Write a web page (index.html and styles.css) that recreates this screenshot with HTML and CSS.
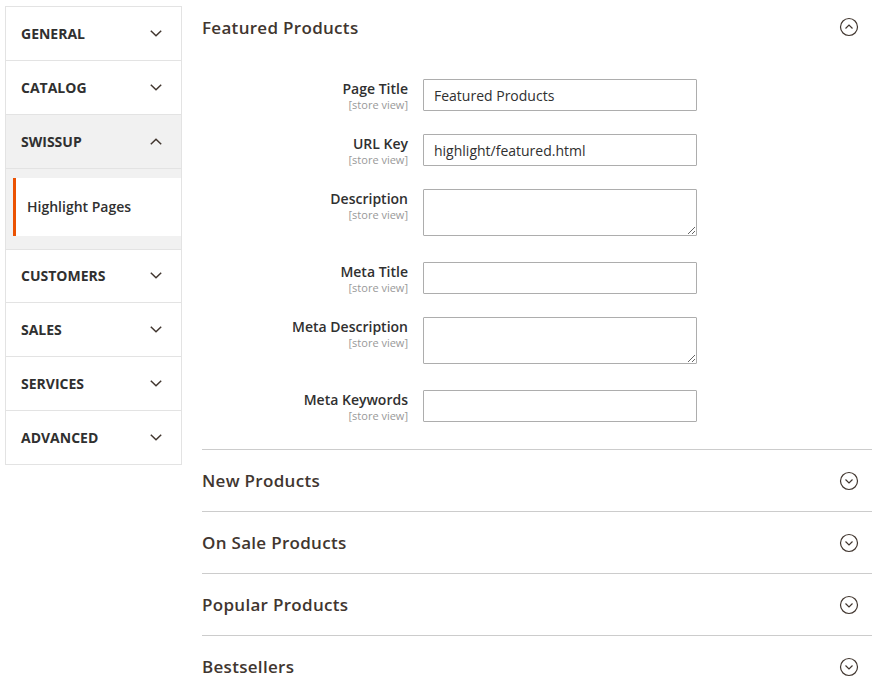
FILE: index.html
```html
<!DOCTYPE html>
<html>
<head>
<meta charset="utf-8">
<link rel="stylesheet" href="styles.css">
</head>
<body>
<div class="page">
  <nav class="sidebar">
    <div class="tab"><span>GENERAL</span><svg class="chev" width="12" height="7" viewBox="0 0 12 7"><polyline points="0.8,0.8 6,5.8 11.2,0.8"/></svg></div>
    <div class="tab"><span>CATALOG</span><svg class="chev" width="12" height="7" viewBox="0 0 12 7"><polyline points="0.8,0.8 6,5.8 11.2,0.8"/></svg></div>
    <div class="tab open"><span>SWISSUP</span><svg class="chev" width="12" height="7" viewBox="0 0 12 7"><polyline points="0.8,6.2 6,1.2 11.2,6.2"/></svg></div>
    <div class="submenu">
      <div class="subitem">Highlight Pages</div>
    </div>
    <div class="tab after-sub"><span>CUSTOMERS</span><svg class="chev" width="12" height="7" viewBox="0 0 12 7"><polyline points="0.8,0.8 6,5.8 11.2,0.8"/></svg></div>
    <div class="tab"><span>SALES</span><svg class="chev" width="12" height="7" viewBox="0 0 12 7"><polyline points="0.8,0.8 6,5.8 11.2,0.8"/></svg></div>
    <div class="tab"><span>SERVICES</span><svg class="chev" width="12" height="7" viewBox="0 0 12 7"><polyline points="0.8,0.8 6,5.8 11.2,0.8"/></svg></div>
    <div class="tab"><span>ADVANCED</span><svg class="chev" width="12" height="7" viewBox="0 0 12 7"><polyline points="0.8,0.8 6,5.8 11.2,0.8"/></svg></div>
  </nav>
  <main class="main">
    <section class="section first">
      <div class="head"><h2>Featured Products</h2><svg class="toggle" width="20" height="20" viewBox="0 0 20 20"><circle cx="10" cy="10" r="8.5"/><polyline points="6.5,11.5 10,8 13.5,11.5"/></svg></div>
      <div class="form">
        <div class="row">
          <div class="label"><div class="lt">Page Title</div><div class="scope">[store view]</div></div>
          <input class="field" type="text" value="Featured Products">
        </div>
        <div class="row">
          <div class="label"><div class="lt">URL Key</div><div class="scope">[store view]</div></div>
          <input class="field" type="text" value="highlight/featured.html">
        </div>
        <div class="row tall">
          <div class="label"><div class="lt">Description</div><div class="scope">[store view]</div></div>
          <textarea class="field area"></textarea>
        </div>
        <div class="row">
          <div class="label"><div class="lt">Meta Title</div><div class="scope">[store view]</div></div>
          <input class="field" type="text" value="">
        </div>
        <div class="row tall">
          <div class="label"><div class="lt">Meta Description</div><div class="scope">[store view]</div></div>
          <textarea class="field area"></textarea>
        </div>
        <div class="row lastrow">
          <div class="label"><div class="lt">Meta Keywords</div><div class="scope">[store view]</div></div>
          <input class="field" type="text" value="">
        </div>
      </div>
    </section>
    <section class="section">
      <div class="head"><h2>New Products</h2><svg class="toggle" width="20" height="20" viewBox="0 0 20 20"><circle cx="10" cy="10" r="8.5"/><polyline points="6.5,8.5 10,12 13.5,8.5"/></svg></div>
    </section>
    <section class="section">
      <div class="head"><h2>On Sale Products</h2><svg class="toggle" width="20" height="20" viewBox="0 0 20 20"><circle cx="10" cy="10" r="8.5"/><polyline points="6.5,8.5 10,12 13.5,8.5"/></svg></div>
    </section>
    <section class="section">
      <div class="head"><h2>Popular Products</h2><svg class="toggle" width="20" height="20" viewBox="0 0 20 20"><circle cx="10" cy="10" r="8.5"/><polyline points="6.5,8.5 10,12 13.5,8.5"/></svg></div>
    </section>
    <section class="section">
      <div class="head"><h2>Bestsellers</h2><svg class="toggle" width="20" height="20" viewBox="0 0 20 20"><circle cx="10" cy="10" r="8.5"/><polyline points="6.5,8.5 10,12 13.5,8.5"/></svg></div>
    </section>
  </main>
</div>
</body>
</html>
```
FILE: styles.css
```css
* { box-sizing: border-box; }
html, body { margin: 0; padding: 0; background: #fff; }
body {
  font-family: "Open Sans", "Noto Sans", sans-serif;
  color: #303030;
  font-size: 14px;
}
.page {
  display: flex;
  align-items: flex-start;
  gap: 20px;
  padding: 0 0 0 5px;
}
.sidebar {
  width: 177px;
  flex: 0 0 177px;
  margin-top: 6px;
  border: 1px solid #e3e3e3;
  border-bottom: none;
  background: #fff;
}
.tab {
  height: 54px;
  border-bottom: 1px solid #e3e3e3;
  display: flex;
  align-items: center;
  justify-content: space-between;
  padding: 0 19px 1px 15px;
  font-weight: 700;
  font-size: 14px;
  color: #303030;
}
.tab.open { background: #f1f1f1; }
.tab.after-sub { height: 53px; }
.chev { display: block; }
.chev polyline { fill: none; stroke: #41362f; stroke-width: 1.5; }
.submenu {
  background: #f1f1f1;
  padding: 9px 0 13px 7px;
  border-bottom: 1px solid #e3e3e3;
}
.subitem {
  height: 58px;
  background: #fff;
  border-left: 3px solid #eb5202;
  display: flex;
  align-items: center;
  padding: 0 0 2px 11px;
  font-weight: 600;
  font-size: 14px;
  color: #303030;
}
.main {
  width: 670px;
  flex: 0 0 670px;
}
.section { border-top: 1px solid #cccccc; }
.section.first { border-top: none; }
.head {
  height: 61px;
  display: flex;
  align-items: center;
  justify-content: space-between;
  padding-right: 13px;
}
.section.first .head { height: 54px; }
.head h2 {
  margin: 0;
  font-size: 17px;
  font-weight: 600;
  color: #41362f;
  letter-spacing: 0.3px;
}
.toggle { display: block; }
.toggle circle, .toggle polyline { fill: none; stroke: #41362f; stroke-width: 1.2; }
.form {
  padding-top: 25px;
  padding-bottom: 27px;
}
.row {
  display: grid;
  grid-template-columns: 206px 274px;
  column-gap: 15px;
  margin-bottom: 23px;
  align-items: start;
}
.row.tall { margin-bottom: 26px; }
.row.lastrow { margin-bottom: 0; }
.label {
  text-align: right;
  padding-top: 1px;
}
.lt {
  font-size: 14px;
  font-weight: 600;
  line-height: 18px;
  color: #303030;
}
.scope {
  font-size: 11px;
  line-height: 13px;
  color: #999999;
}
.field {
  display: block;
  width: 274px;
  height: 32px;
  margin: 0;
  border: 1px solid #adadad;
  border-radius: 1px;
  padding: 0 10px;
  font-family: "Open Sans", "Noto Sans", sans-serif;
  font-size: 14px;
  color: #303030;
  background: #fff;
  outline: none;
}
.field.area {
  height: 47px;
  resize: vertical;
  padding: 6px 10px;
}
```
